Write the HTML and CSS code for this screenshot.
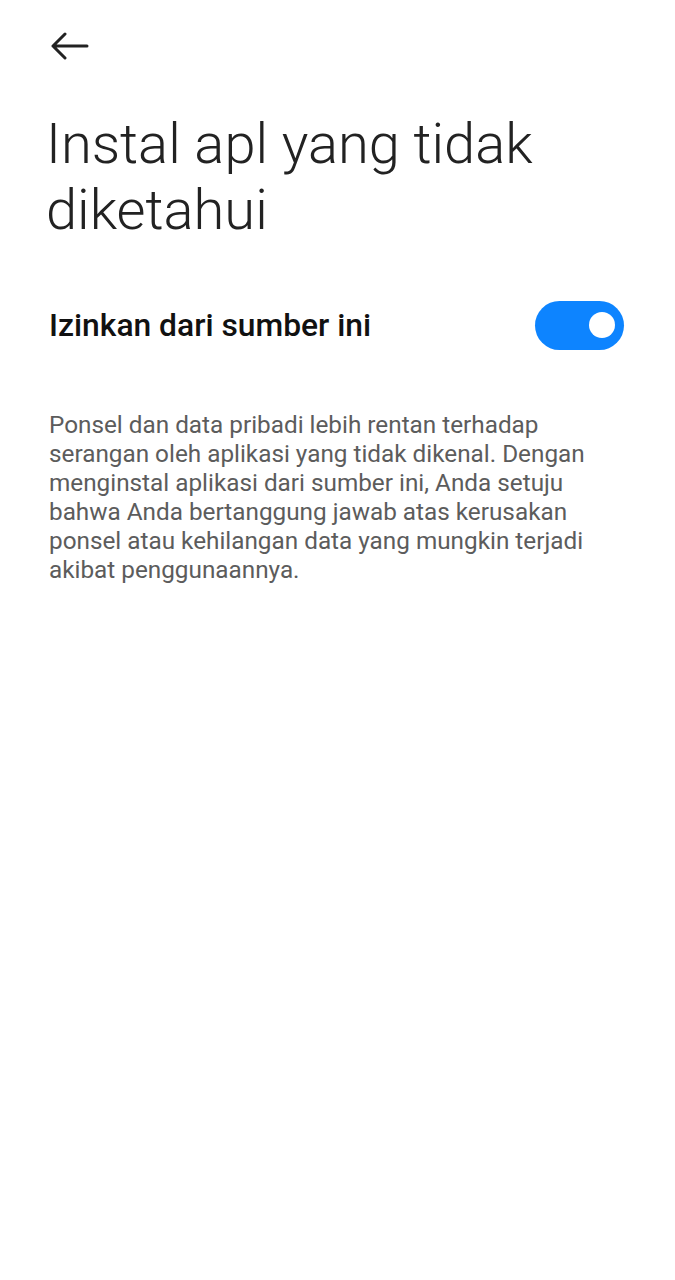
FILE: index.html
```html
<!DOCTYPE html>
<html lang="id">
<head>
<meta charset="utf-8">
<link rel="stylesheet" href="styles.css">
</head>
<body>
<div class="screen">
  <header class="topbar">
    <svg class="back" viewBox="0 0 40 28" width="40" height="28">
      <path d="M3 14 H37 M15 2 L3 14 L15 26" fill="none" stroke="#222" stroke-width="3" stroke-linecap="round" stroke-linejoin="round"/>
    </svg>
  </header>
  <h1 class="title">Instal apl yang tidak diketahui</h1>
  <div class="row">
    <span class="label">Izinkan dari sumber ini</span>
    <div class="toggle"><div class="knob"></div></div>
  </div>
  <p class="desc">Ponsel dan data pribadi lebih rentan terhadap serangan oleh aplikasi yang tidak dikenal. Dengan menginstal aplikasi dari sumber ini, Anda setuju bahwa Anda bertanggung jawab atas kerusakan ponsel atau kehilangan data yang mungkin terjadi akibat penggunaannya.</p>
</div>
</body>
</html>
```
FILE: styles.css
```css
html, body {
  margin: 0;
  padding: 0;
  background: #fff;
}
body {
  font-family: Roboto, "Noto Sans", sans-serif;
}
.screen {
  width: 675px;
  min-height: 1280px;
  display: flex;
  flex-direction: column;
}
.topbar {
  height: 92px;
  padding: 32px 0 0 50px;
  box-sizing: border-box;
}
.back {
  display: block;
}
.title {
  margin: 19px 0 0 46px;
  font-weight: 300;
  font-size: 56px;
  line-height: 66px;
  color: #222;
  letter-spacing: 0;
  width: 560px;
}
.row {
  display: flex;
  align-items: center;
  justify-content: space-between;
  margin: 57px 51px 0 49px;
  height: 50px;
}
.label {
  font-size: 31.8px;
  font-weight: 500;
  color: #111;
}
.toggle {
  width: 89px;
  height: 49px;
  border-radius: 25px;
  background: #0d84ff;
  display: flex;
  align-items: center;
  justify-content: flex-end;
  padding-right: 9px;
  box-sizing: border-box;
}
.knob {
  width: 26px;
  height: 26px;
  border-radius: 50%;
  background: #fff;
}
.desc {
  margin: 60px 51px 0 49px;
  font-size: 24.3px;
  line-height: 29px;
  color: #5c5c5c;
}
```
